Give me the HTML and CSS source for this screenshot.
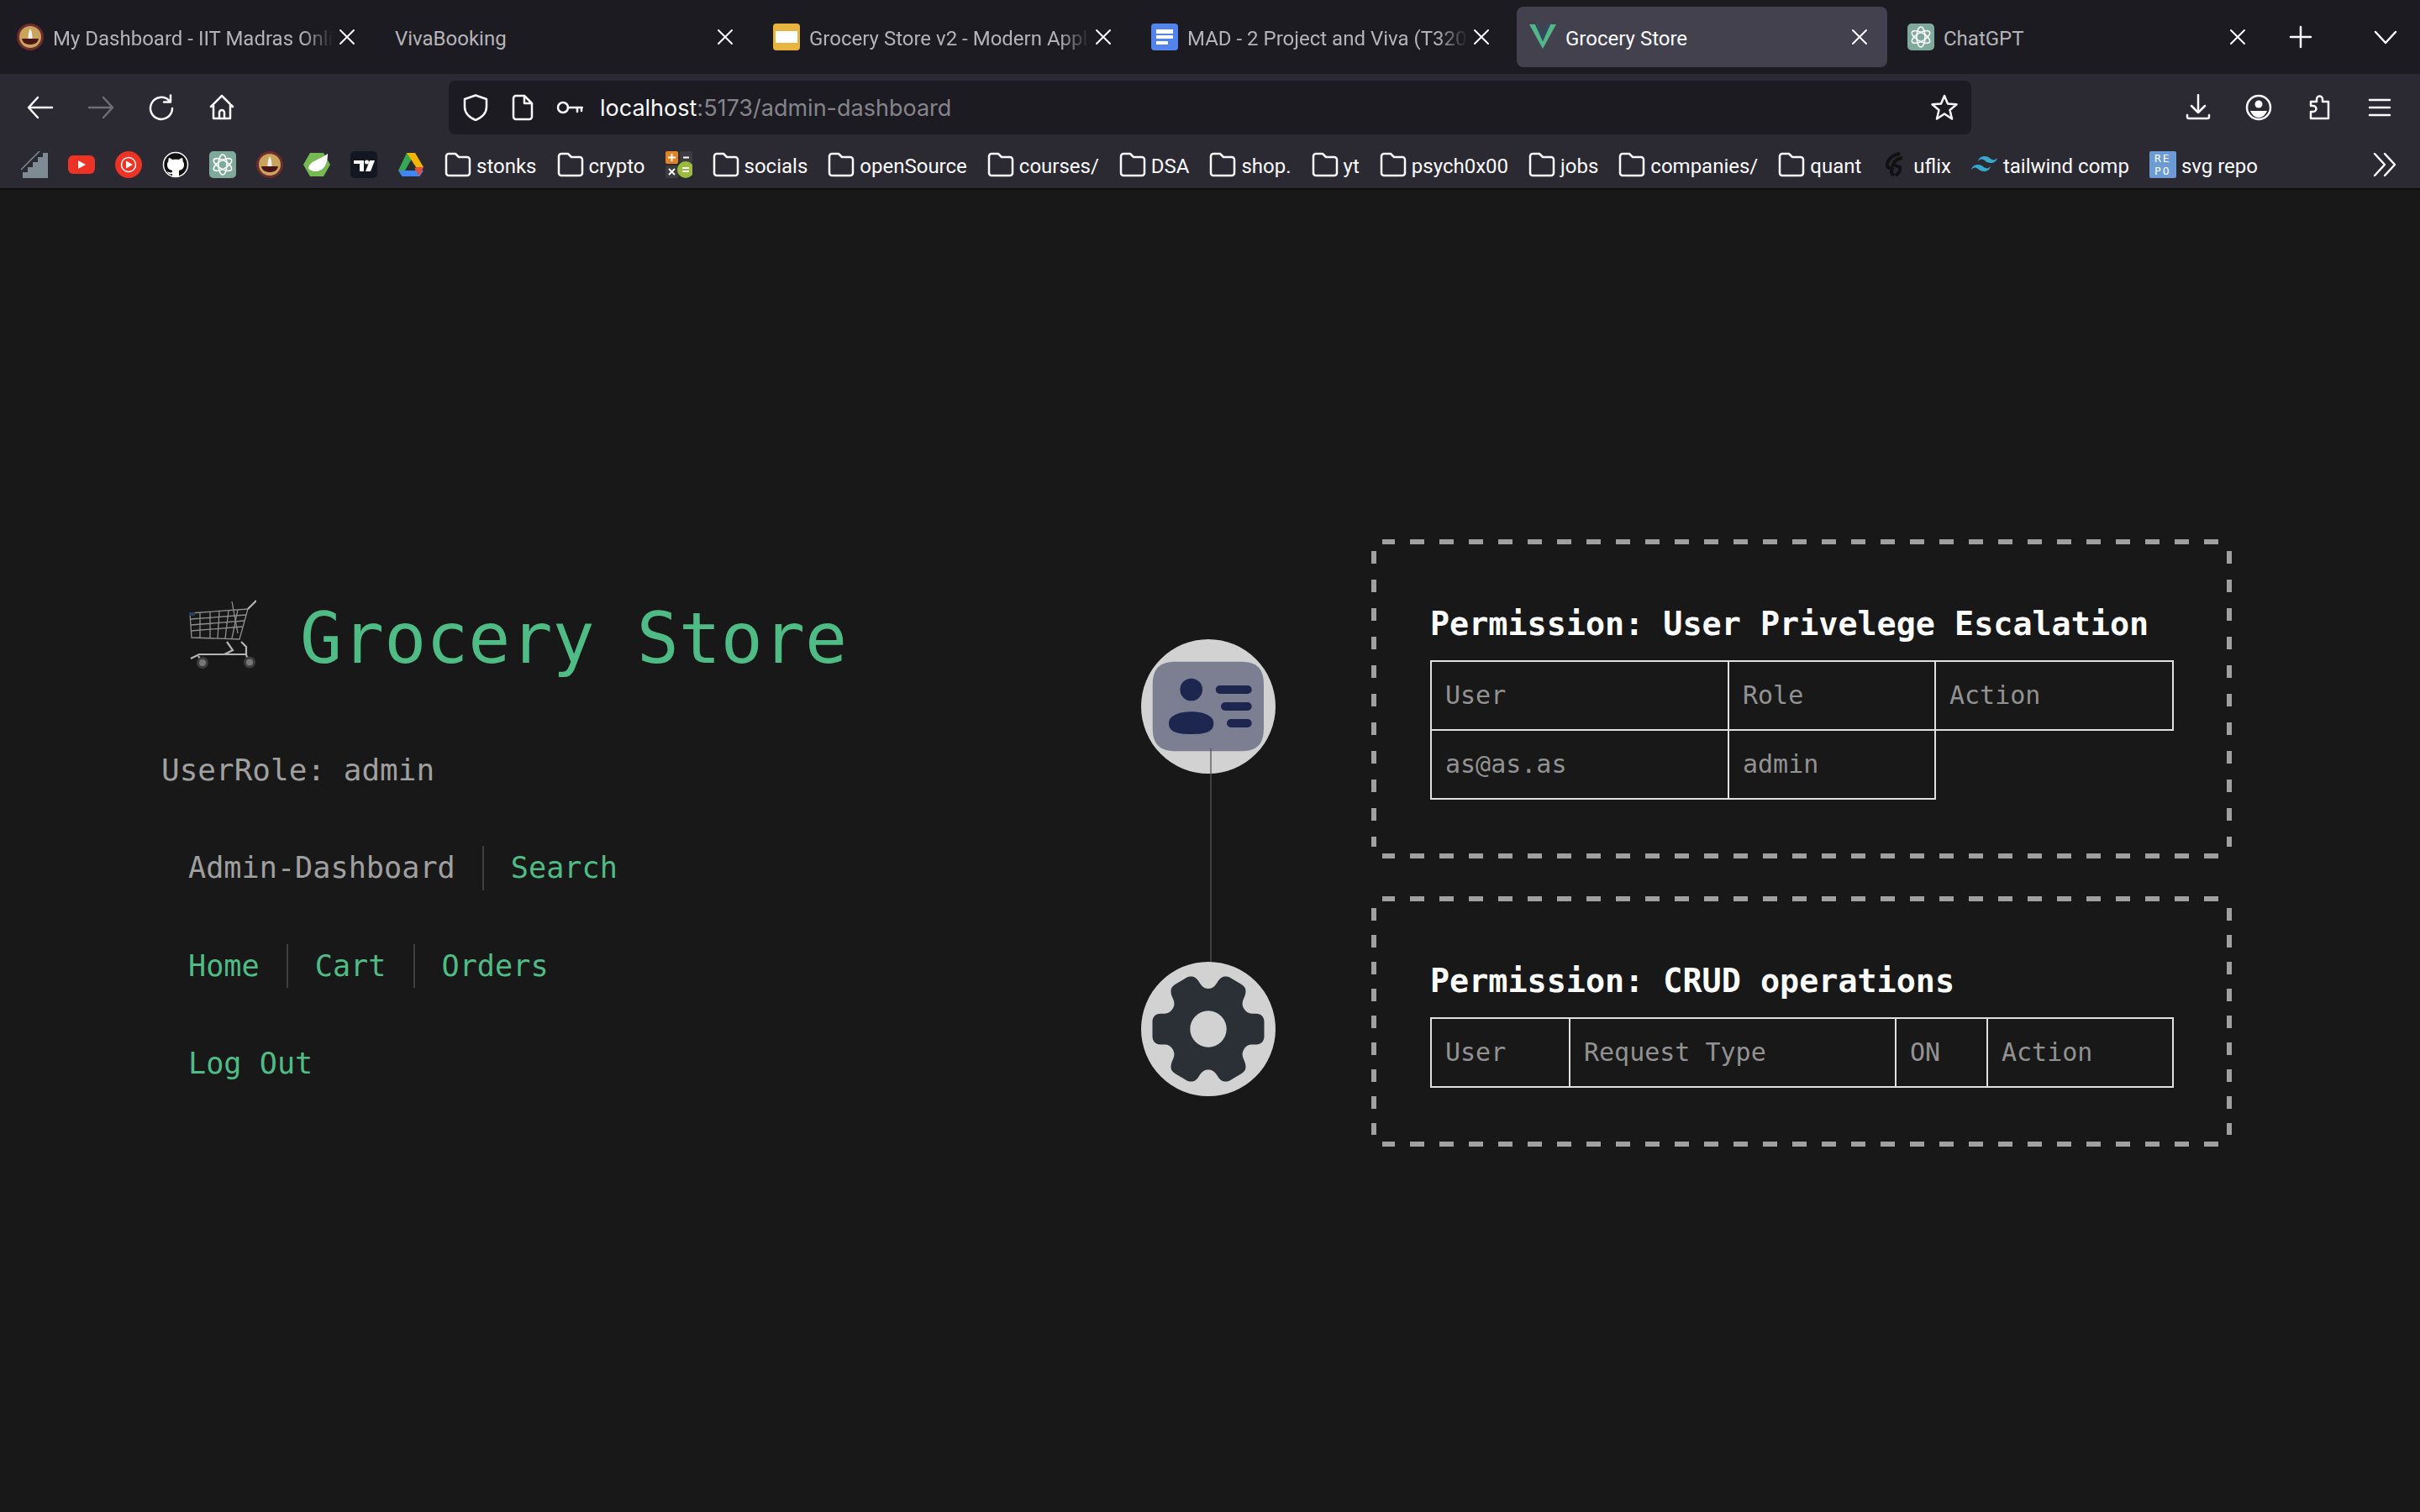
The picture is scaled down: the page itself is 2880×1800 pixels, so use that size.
FILE: index.html
```html
<!DOCTYPE html>
<html lang="en">
<head>
<meta charset="UTF-8">
<meta name="viewport" content="width=device-width, initial-scale=1.0">
<title>Grocery Store</title>
<link rel="stylesheet" href="styles.css">
</head>
<body>
<div class="tabbar">
  <div class="tab">
    <svg class="favicon" viewBox="0 0 32 32"><circle cx="16" cy="16" r="16" fill="#6e2a2c"/><circle cx="16" cy="16" r="13" fill="#c9a45c"/><path d="M6 18h20c-1 5-5 7-10 7s-9-2-10-7z" fill="#4a1512"/><path d="M16 6c2 3 2.500 7 2.500 12h-5c0-5 .5-9 2.500-12z" fill="#eee"/></svg>
    <span class="tab-title">My Dashboard - IIT Madras Onli</span>
    <span class="tab-close"><svg viewBox="0 0 32 32"><path d="M8 8l16 16M24 8L8 24"/></svg></span>
  </div>
  <div class="tab">
    <span class="tab-title">VivaBooking</span>
    <span class="tab-close"><svg viewBox="0 0 32 32"><path d="M8 8l16 16M24 8L8 24"/></svg></span>
  </div>
  <div class="tab">
    <svg class="favicon" viewBox="0 0 32 32"><rect x="0" width="32" height="32" rx="4" fill="#e8b33e"/><rect x="3" y="9" width="26" height="14" fill="#fff"/></svg>
    <span class="tab-title">Grocery Store v2 - Modern Appl</span>
    <span class="tab-close"><svg viewBox="0 0 32 32"><path d="M8 8l16 16M24 8L8 24"/></svg></span>
  </div>
  <div class="tab">
    <svg class="favicon" viewBox="0 0 32 32"><rect width="32" height="32" rx="4" fill="#5384ed"/><path d="M6 7h20v5H6zM6 14h20v4H6zM6 21h14v4H6z" fill="#fff"/></svg>
    <span class="tab-title">MAD - 2 Project and Viva (T320</span>
    <span class="tab-close"><svg viewBox="0 0 32 32"><path d="M8 8l16 16M24 8L8 24"/></svg></span>
  </div>
  <div class="tab tab-active">
    <svg class="favicon" viewBox="0 0 32 32"><path d="M0 1h7l9 20L25 1h7L16 30z" fill="#52b788"/><path d="M7 1h5l4 10 4-10h5l-9 20z" fill="#35495e"/></svg>
    <span class="tab-title">Grocery Store</span>
    <span class="tab-close"><svg viewBox="0 0 32 32"><path d="M8 8l16 16M24 8L8 24"/></svg></span>
  </div>
  <div class="tab">
    <svg class="favicon" viewBox="0 0 32 32"><rect width="32" height="32" rx="5" fill="#7ea99b"/><g class="knot"><ellipse cx="16" cy="16" rx="5" ry="12"/><ellipse cx="16" cy="16" rx="5" ry="12" transform="rotate(60 16 16)"/><ellipse cx="16" cy="16" rx="5" ry="12" transform="rotate(120 16 16)"/></g></svg>
    <span class="tab-title">ChatGPT</span>
    <span class="tab-close"><svg viewBox="0 0 32 32"><path d="M8 8l16 16M24 8L8 24"/></svg></span>
  </div>
  <span class="tabbar-btn"><svg class="ic" viewBox="0 0 32 32"><path d="M16 4v24M4 16h24"/></svg></span>
  <span class="tabbar-btn tabbar-list"><svg class="ic" viewBox="0 0 32 32"><path d="M4 10l12 13 12-13"/></svg></span>
</div>

<div class="toolbar">
  <span class="tool"><svg class="ic" viewBox="0 0 32 32"><path d="M30 16H2M13 4L2 16l11 12"/></svg></span>
  <span class="tool tool-off"><svg class="ic" viewBox="0 0 32 32"><path d="M2 16h28M19 4l11 12-11 12"/></svg></span>
  <span class="tool"><svg class="ic" viewBox="0 0 32 32"><path d="M25 7.500A13 13 0 1 0 29 17M27 1.500v8h-8"/></svg></span>
  <span class="tool"><svg class="ic" viewBox="0 0 32 32"><path d="M3 15L16 2l13 13M6 12v17h20V12M13 29v-7a3 3 0 0 1 6 0v7"/></svg></span>
  <div class="urlbar">
    <svg class="ic url-ic" viewBox="0 0 32 32"><path d="M16 1.500L29 6v9c0 8-6 13-13 16C9 28 3 23 3 15V6z"/></svg>
    <svg class="ic url-ic" viewBox="0 0 32 32"><path d="M5 5a3 3 0 0 1 3-3h10l9 9v16a3 3 0 0 1-3 3H8a3 3 0 0 1-3-3zM18 2v9h9"/></svg>
    <svg class="ic url-ic url-key" viewBox="0 0 32 32"><circle cx="8" cy="16" r="6"/><path d="M14 16h17M25 16v5M30 16v4"/></svg>
    <span class="url-text">localhost<span class="url-dim">:5173/admin-dashboard</span></span>
    <svg class="ic url-star" viewBox="0 0 32 32"><path d="M16 2l4 9.500 10.500.8-8 6.700 2.500 10.500L16 23.500 7 29.500l2.500-10.500-8-6.700L12 11.500z"/></svg>
  </div>
  <div class="tool-right">
    <span class="tool"><svg class="ic" viewBox="0 0 32 32"><path d="M16 1v21M8 14l8 8 8-8M3 25v2a2 2 0 0 0 2 2h22a2 2 0 0 0 2-2v-2"/></svg></span>
    <span class="tool"><svg class="ic" viewBox="0 0 32 32"><circle cx="16" cy="16" r="14"/><circle class="solid" cx="16" cy="12" r="4.500"/><path class="solid" d="M6 20h20c-2 5-6 8-10 8s-8-3-10-8z"/></svg></span>
    <span class="tool"><svg class="ic" viewBox="0 0 32 32"><path d="M6 9h7V6a3.500 3.500 0 0 1 7 0v3h7v20H6v-8h3a3.500 3.500 0 0 0 0-7H6z"/></svg></span>
    <span class="tool"><svg class="ic" viewBox="0 0 32 32"><path d="M4 7h24M4 16h24M4 25h24"/></svg></span>
  </div>
</div>

<div class="bookmarks">
  <svg class="bm-icon" viewBox="0 0 32 32"><path d="M32 2v30H2v-7h6v-6h6v-6h6V7h6V2z" fill="#7f8b94"/><path d="M0 22L22 0" stroke="#7f8b94" stroke-width="1.500"/></svg>
  <svg class="bm-icon" viewBox="0 0 32 32"><rect x="0" y="5" width="32" height="22" rx="6" fill="#ee3224"/><path d="M12 11l9 5-9 5z" fill="#fff"/></svg>
  <svg class="bm-icon" viewBox="0 0 32 32"><circle cx="16" cy="16" r="16" fill="#ee3224"/><circle cx="16" cy="16" r="8.500" fill="none" stroke="#fff" stroke-width="1.500"/><path d="M13 11.500l8 4.500-8 4.500z" fill="#fff"/></svg>
  <svg class="bm-icon" viewBox="0 0 32 32"><circle cx="16" cy="16" r="14.500" fill="#111" stroke="#fff" stroke-width="1.500"/><path d="M12 31v-4c-4 1-5-1-6-3 2 1 3 2 6 1v-2c-4-1-6-3-6-7 0-2 .5-3 1.500-4-.3-1 0-3 .5-4 1.500 0 3 1 4 2 2.500-.5 5.500-.5 8 0 1-1 2.500-2 4-2 .5 1 .8 3 .5 4 1 1 1.500 2 1.500 4 0 4-2 6-6 7v8z" fill="#fff"/></svg>
  <svg class="bm-icon" viewBox="0 0 32 32"><rect width="32" height="32" rx="5" fill="#7ea99b"/><g class="knot"><ellipse cx="16" cy="16" rx="5" ry="12"/><ellipse cx="16" cy="16" rx="5" ry="12" transform="rotate(60 16 16)"/><ellipse cx="16" cy="16" rx="5" ry="12" transform="rotate(120 16 16)"/></g></svg>
  <svg class="bm-icon" viewBox="0 0 32 32"><circle cx="16" cy="16" r="16" fill="#6e2a2c"/><circle cx="16" cy="16" r="13" fill="#c9a45c"/><path d="M6 18h20c-1 5-5 7-10 7s-9-2-10-7z" fill="#4a1512"/><path d="M16 6c2 3 2.500 7 2.500 12h-5c0-5 .5-9 2.500-12z" fill="#eee"/></svg>
  <svg class="bm-icon" viewBox="0 0 32 32"><path d="M8 2h16l8 14-8 14H8L0 16z" fill="#76b852"/><path d="M29 3c0 13-5 21-15 21-4 0-7-2-8-4 2-9 12-9 23-17z" fill="#fff"/></svg>
  <svg class="bm-icon" viewBox="0 0 32 32"><rect width="32" height="32" rx="5" fill="#131722"/><path d="M4 11h12v13h-5V15H4z" fill="#fff"/><circle cx="19.500" cy="13" r="2.500" fill="#fff"/><path d="M23 11h6l-5 13h-6z" fill="#fff"/></svg>
  <svg class="bm-icon" viewBox="0 0 32 32"><path d="M11 2h10L9 23H1z" fill="#34a853"/><path d="M21 2l10 17h-9L11 2z" fill="#f4b400"/><path d="M1 23l4.500 7h21l4.500-7z" fill="#4285f4"/><path d="M22 19h9l-4.500 11-6-9z" fill="#dd5044"/></svg>
  <div class="bm"><svg class="folder" viewBox="0 0 32 32"><path d="M2 6a3 3 0 0 1 3-3h8l4 4h10a3 3 0 0 1 3 3v16a3 3 0 0 1-3 3H5a3 3 0 0 1-3-3z"/></svg><span class="bm-label">stonks</span></div>
  <div class="bm"><svg class="folder" viewBox="0 0 32 32"><path d="M2 6a3 3 0 0 1 3-3h8l4 4h10a3 3 0 0 1 3 3v16a3 3 0 0 1-3 3H5a3 3 0 0 1-3-3z"/></svg><span class="bm-label">crypto</span></div>
  <svg class="bm-icon" viewBox="0 0 32 32"><rect x="0" y="0" width="15" height="15" rx="2" fill="#e0842a"/><rect x="17" y="0" width="15" height="15" rx="2" fill="#3c3c40"/><rect x="0" y="17" width="15" height="15" rx="2" fill="#3c3c40"/><circle cx="24" cy="22" r="10" fill="#9bbc3a"/><path d="M7.500 3v9M3 7.500h9M21 7.500h7M4 21l7 7M11 21l-7 7M20 20h8M20 24h8" stroke="#fff" stroke-width="1.800"/></svg>
  <div class="bm"><svg class="folder" viewBox="0 0 32 32"><path d="M2 6a3 3 0 0 1 3-3h8l4 4h10a3 3 0 0 1 3 3v16a3 3 0 0 1-3 3H5a3 3 0 0 1-3-3z"/></svg><span class="bm-label">socials</span></div>
  <div class="bm"><svg class="folder" viewBox="0 0 32 32"><path d="M2 6a3 3 0 0 1 3-3h8l4 4h10a3 3 0 0 1 3 3v16a3 3 0 0 1-3 3H5a3 3 0 0 1-3-3z"/></svg><span class="bm-label">openSource</span></div>
  <div class="bm"><svg class="folder" viewBox="0 0 32 32"><path d="M2 6a3 3 0 0 1 3-3h8l4 4h10a3 3 0 0 1 3 3v16a3 3 0 0 1-3 3H5a3 3 0 0 1-3-3z"/></svg><span class="bm-label">courses/</span></div>
  <div class="bm"><svg class="folder" viewBox="0 0 32 32"><path d="M2 6a3 3 0 0 1 3-3h8l4 4h10a3 3 0 0 1 3 3v16a3 3 0 0 1-3 3H5a3 3 0 0 1-3-3z"/></svg><span class="bm-label">DSA</span></div>
  <div class="bm"><svg class="folder" viewBox="0 0 32 32"><path d="M2 6a3 3 0 0 1 3-3h8l4 4h10a3 3 0 0 1 3 3v16a3 3 0 0 1-3 3H5a3 3 0 0 1-3-3z"/></svg><span class="bm-label">shop.</span></div>
  <div class="bm"><svg class="folder" viewBox="0 0 32 32"><path d="M2 6a3 3 0 0 1 3-3h8l4 4h10a3 3 0 0 1 3 3v16a3 3 0 0 1-3 3H5a3 3 0 0 1-3-3z"/></svg><span class="bm-label">yt</span></div>
  <div class="bm"><svg class="folder" viewBox="0 0 32 32"><path d="M2 6a3 3 0 0 1 3-3h8l4 4h10a3 3 0 0 1 3 3v16a3 3 0 0 1-3 3H5a3 3 0 0 1-3-3z"/></svg><span class="bm-label">psych0x00</span></div>
  <div class="bm"><svg class="folder" viewBox="0 0 32 32"><path d="M2 6a3 3 0 0 1 3-3h8l4 4h10a3 3 0 0 1 3 3v16a3 3 0 0 1-3 3H5a3 3 0 0 1-3-3z"/></svg><span class="bm-label">jobs</span></div>
  <div class="bm"><svg class="folder" viewBox="0 0 32 32"><path d="M2 6a3 3 0 0 1 3-3h8l4 4h10a3 3 0 0 1 3 3v16a3 3 0 0 1-3 3H5a3 3 0 0 1-3-3z"/></svg><span class="bm-label">companies/</span></div>
  <div class="bm"><svg class="folder" viewBox="0 0 32 32"><path d="M2 6a3 3 0 0 1 3-3h8l4 4h10a3 3 0 0 1 3 3v16a3 3 0 0 1-3 3H5a3 3 0 0 1-3-3z"/></svg><span class="bm-label">quant</span></div>
  <div class="bm"><svg class="bm-small" viewBox="0 0 32 32"><path d="M22 3C14 4 8 9 7 15c-1 5 3 6 7 4M14 19c-3 3-3 7 1 10M25 8c-6 1-10 4-11 8l8 3c1 4-1 7-5 10" fill="none" stroke="#111" stroke-width="4"/></svg><span class="bm-label">uflix</span></div>
  <div class="bm"><svg class="bm-small" viewBox="0 0 32 32"><path d="M16 6c-4 0-7 2-8 6 2-2 4-3 6-2 3 1 4 4 9 4 4 0 7-2 8-6-2 2-4 3-6 2-3-1-4-4-9-4zM8 16c-4 0-7 2-8 6 2-2 4-3 6-2 3 1 4 4 9 4 4 0 7-2 8-6-2 2-4 3-6 2-3-1-4-4-9-4z" fill="#38a9c9"/></svg><span class="bm-label">tailwind comp</span></div>
  <div class="bm"><span class="repo-icon">RE PO</span><span class="bm-label">svg repo</span></div>
  <span class="bm-more"><svg class="ic" viewBox="0 0 32 32"><path d="M4 3l12 13L4 29M16 3l12 13-12 13"/></svg></span>
</div>

<div class="app">
  <div class="sidebar">
    <div class="brand">
      <svg class="cart" viewBox="0 0 80 82">
        <g class="cart-lines">
          <path d="M1 16L70 11 60 47 3 45z"/>
          <path d="M1.500 23L68 18M2 30L66 25M2.500 37L63.500 32M13 15v31M25 14.500v31M36 14l-2 32M47 13l-4 33M58 12l-7 34"/>
          <path d="M51 2l7 38"/>
        </g>
        <g class="cart-frame">
          <path d="M70 11l3-3 7-7"/>
          <path d="M45 50l7 10-10 5M62 50l6 6v9"/>
          <path d="M2 70l10-5h57"/>
          <path d="M11 67l5 8M68 66l4 8"/>
        </g>
        <rect x="0" y="15" width="7" height="4" fill="#25415f"/>
        <circle class="cart-wheel" cx="16" cy="75" r="5.500"/>
        <circle class="cart-wheel" cx="72" cy="74.500" r="5.500"/>
      </svg>
      <h1 class="store-name">Grocery Store</h1>
    </div>
    <p class="user-role">UserRole: admin</p>
    <nav class="nav-row">
      <a class="nav-link nav-current">Admin-Dashboard</a>
      <a class="nav-link">Search</a>
    </nav>
    <nav class="nav-row">
      <a class="nav-link">Home</a>
      <a class="nav-link">Cart</a>
      <a class="nav-link">Orders</a>
    </nav>
    <nav class="nav-row">
      <a class="nav-link">Log Out</a>
    </nav>
  </div>

  <div class="perm-list">
    <div class="perm-item">
      <div class="perm-icon perm-icon-line">
        <svg viewBox="0 0 160 160">
          <circle cx="80" cy="80" r="80" fill="#d2d2d2"/>
          <path d="M42 26.700h76c20 0 28 8 28 28v50.600c0 20-8 28-28 28H42c-20 0-28.300-8-28.300-28V54.700c0-20 8.300-28 28.300-28z" fill="#7b7f91"/>
          <circle cx="59.700" cy="60" r="13.300" fill="#1d264e"/>
          <path d="M33 100c0-9 12-13.700 26.700-13.700S86.300 91 86.300 100c0 10-9 13-26.600 13S33 110 33 100z" fill="#1d264e"/>
          <rect x="88.700" y="55" width="43" height="10" rx="5" fill="#1d264e"/>
          <rect x="95" y="75" width="36.700" height="10" rx="5" fill="#1d264e"/>
          <rect x="102" y="95" width="29.700" height="10" rx="5" fill="#1d264e"/>
        </svg>
      </div>
      <section class="perm-card perm-card-tall">
        <h3 class="perm-title">Permission: User Privelege Escalation</h3>
        <table class="perm-table">
          <colgroup><col class="col-a1"><col class="col-a2"><col class="col-a3"></colgroup>
          <tr><td>User</td><td>Role</td><td>Action</td></tr>
          <tr><td>as@as.as</td><td>admin</td></tr>
        </table>
      </section>
    </div>
    <div class="perm-item">
      <div class="perm-icon">
        <svg viewBox="0 0 160 160">
          <circle cx="80" cy="80" r="80" fill="#d2d2d2"/>
          <path d="M80 32c5 0 8-3 11-8s6-6.500 9.500-6.500c2.500 0 4.500.5 6.500 2l11 6.500c4.500 2.500 6.500 5 6.500 9 0 3-1 6-2.500 9-2 4-2 8 .5 12s5.500 5.700 9.500 5.700h5c6 0 9.500 4.300 9.500 9.300v18c0 5-3.500 9.500-9.500 9.500h-5c-4 0-7 1.500-9.500 5.500s-2.500 8-.5 12c1.500 3 2.500 6 2.500 9 0 4-2 6.500-6.500 9l-11 6.500c-2 1.500-4 2-6.500 2-3.500 0-6.500-1.500-9.500-6.500s-6-7.500-11-7.500-8 2.500-11 7.500-6 6.500-9.500 6.500c-2.500 0-4.500-.5-6.500-2l-11-6.500c-4.500-2.500-6.500-5-6.500-9 0-3 1-6 2.500-9 2-4 2-8-.5-12s-5.500-5.500-9.500-5.500h-5c-6 0-9.500-4.500-9.500-9.500v-18c0-5 3.500-9.300 9.500-9.300h5c4 0 7-1.700 9.500-5.700s2.500-8 .5-12c-1.500-3-2.500-6-2.500-9 0-4 2-6.500 6.500-9l11-6.500c2-1.500 4-2 6.500-2 3.500 0 6.500 1.500 9.500 6.500s6 8 11 8z" fill="#2b2f36"/>
          <circle cx="80" cy="80" r="21.700" fill="#d2d2d2"/>
        </svg>
      </div>
      <section class="perm-card perm-card-short">
        <h3 class="perm-title">Permission: CRUD operations</h3>
        <table class="perm-table">
          <colgroup><col class="col-b1"><col class="col-b2"><col class="col-b3"><col class="col-b4"></colgroup>
          <tr><td>User</td><td>Request Type</td><td>ON</td><td>Action</td></tr>
        </table>
      </section>
    </div>
  </div>
</div>
</body>
</html>
```

FILE: styles.css
```css
* {
  box-sizing: border-box;
}
html, body {
  margin: 0;
  height: 100%;
}
body {
  display: flex;
  flex-direction: column;
  overflow: hidden;
  background-color: #181818;
  font-family: "DejaVu Sans Mono", monospace;
  color: #a0a0a0;
}

/* browser chrome */
.tabbar {
  display: flex;
  align-items: center;
  flex: none;
  height: 88px;
  gap: 9px;
  padding-left: 5px;
  background-color: #1c1b22;
  font-family: Roboto, sans-serif;
  font-size: 24px;
}
.tab {
  display: flex;
  align-items: center;
  flex: none;
  width: 441px;
  height: 72px;
  padding: 0 17px 0 15px;
  border-radius: 8px;
  color: #b4b4b8;
}
.tab-active {
  background-color: #42414d;
  color: #fbfbfe;
}
.favicon {
  flex: none;
  width: 32px;
  height: 32px;
  margin-right: 11px;
}
.knot ellipse {
  fill: none;
  stroke: #fff;
  stroke-width: 1.600;
}
.tab-title {
  flex: 1;
  min-width: 0;
  padding-top: 3px;
  overflow: hidden;
  white-space: nowrap;
}
.tab:nth-child(1) .tab-title, .tab:nth-child(3) .tab-title, .tab:nth-child(4) .tab-title {
  -webkit-mask-image: linear-gradient(90deg, #000 calc(100% - 36px), transparent);
  mask-image: linear-gradient(90deg, #000 calc(100% - 36px), transparent);
}
.tab-close {
  flex: none;
  display: flex;
  width: 32px;
  height: 32px;
}
.tab-close path {
  fill: none;
  stroke: #fbfbfe;
  stroke-width: 2;
  stroke-linecap: round;
}
.ic, .folder {
  fill: none;
  stroke: #fbfbfe;
  stroke-width: 2.500;
  stroke-linecap: round;
  stroke-linejoin: round;
}
.ic .solid {
  fill: #fbfbfe;
  stroke: none;
}
.tabbar-btn {
  display: flex;
  width: 32px;
  height: 32px;
  margin-left: 17px;
}
.tabbar-list {
  margin-left: 60px;
}
.toolbar {
  display: flex;
  align-items: center;
  flex: none;
  height: 72px;
  padding: 8px 12px 0;
  background-color: #2b2a33;
}
.tool {
  display: flex;
  align-items: center;
  justify-content: center;
  width: 72px;
  height: 64px;
}
.tool .ic {
  width: 32px;
  height: 32px;
}
.tool-off .ic {
  stroke: #6f6e75;
}
.urlbar {
  display: flex;
  align-items: center;
  width: 1812px;
  height: 64px;
  margin-left: 234px;
  padding: 0 16px;
  border-radius: 8px;
  background-color: #1c1b22;
}
.url-ic {
  flex: none;
  width: 32px;
  height: 32px;
  margin-right: 24px;
}
.url-key {
  margin-right: 20px;
}
.url-text {
  flex: 1;
  font-family: Inter, sans-serif;
  font-size: 27px;
  color: #fbfbfe;
}
.url-dim {
  color: #85848b;
}
.url-star {
  flex: none;
  width: 32px;
  height: 32px;
}
.tool-right {
  display: flex;
  margin-left: auto;
}
.bookmarks {
  display: flex;
  align-items: center;
  flex: none;
  height: 66px;
  gap: 24px;
  padding: 8px 0 0 25px;
  border-bottom: 2px solid #0e0e10;
  background-color: #2b2a33;
  font-family: Roboto, sans-serif;
  font-size: 24px;
  color: #fbfbfe;
}
.bm-icon {
  flex: none;
  width: 32px;
  height: 32px;
}
.bm {
  display: flex;
  align-items: center;
  flex: none;
  gap: 6px;
  white-space: nowrap;
}
.bm-label {
  padding-top: 3px;
}
.folder, .bm-small {
  flex: none;
  width: 32px;
  height: 32px;
}
.repo-icon {
  flex: none;
  width: 32px;
  height: 32px;
  padding-top: 1px;
  background-color: #6c9bd6;
  border-radius: 2px;
  font-size: 13px;
  line-height: 15px;
  letter-spacing: 2px;
  text-align: center;
  white-space: normal;
  color: #fff;
  font-family: "DejaVu Sans Mono", monospace;
}
.bm-more {
  display: flex;
  width: 32px;
  height: 32px;
  margin-left: auto;
  margin-right: 26px;
}

/* page */
.app {
  flex: 1;
  display: flex;
  align-items: center;
  justify-content: space-between;
  padding: 0 224px 19px 192px;
}
.brand {
  display: flex;
  align-items: flex-start;
  height: 83px;
  padding-left: 33px;
}
.cart {
  flex: none;
  width: 80px;
  height: 82px;
}
.cart-lines {
  fill: none;
  stroke: #8f8f8f;
  stroke-width: 1.300;
}
.cart-frame {
  fill: none;
  stroke: #b5b5b5;
  stroke-width: 2.200;
}
.cart-wheel {
  fill: #777;
  stroke: #3c3c3c;
  stroke-width: 3;
}
.store-name {
  margin: 5px 0 0 52px;
  font-size: 83.2px;
  font-weight: 400;
  line-height: 83px;
  color: #4fbc85;
}
.user-role {
  margin: 91px 0 0;
  font-size: 36px;
  line-height: 58px;
}
.nav-row {
  display: flex;
  height: 52.8px;
  margin-top: 64px;
  font-size: 35.2px;
  line-height: 52.8px;
}
.user-role + .nav-row {
  margin-top: 61px;
}
.nav-link {
  padding: 0 32px;
  border-left: 2px solid #3f3f3f;
  color: #4fbc85;
  white-space: nowrap;
}
.nav-link:first-child {
  border-left: 0;
}
.nav-current {
  color: #a0a0a0;
}
.perm-list {
  display: flex;
  flex-direction: column;
  gap: 45px;
}
.perm-item {
  display: flex;
  align-items: center;
  gap: 114px;
}
.perm-icon {
  position: relative;
  flex: none;
  width: 160px;
  height: 160px;
  margin-top: 18px;
}
.perm-icon svg {
  display: block;
}
.perm-icon-line::after {
  content: "";
  position: absolute;
  left: 82px;
  top: 130px;
  width: 2px;
  height: 255px;
  background-color: rgba(84, 84, 84, 0.65);
}
.perm-card {
  width: 1024px;
  padding: 70px 70px 70px;
  --dash: #a0a0a0;
  background:
    repeating-linear-gradient(90deg, var(--dash) -2.4px 15px, transparent 15px 32.6px) center top / 998px 6px no-repeat,
    repeating-linear-gradient(90deg, var(--dash) -2.4px 15px, transparent 15px 32.6px) center bottom / 998px 6px no-repeat,
    repeating-linear-gradient(180deg, var(--dash) 0 var(--vd), transparent var(--vd) var(--vp)) left center / 6px calc(100% - 28px) no-repeat,
    repeating-linear-gradient(180deg, var(--dash) 0 var(--vd), transparent var(--vd) var(--vp)) right center / 6px calc(100% - 28px) no-repeat;
}
.perm-card-tall {
  --vd: 15px;
  --vp: 34px;
}
.perm-card-short {
  --vd: 15px;
  --vp: 32px;
}
.perm-title {
  margin: 0 0 13px;
  font-size: 38.4px;
  font-weight: 700;
  line-height: 61px;
  color: #fff;
}
.perm-table {
  width: 883px;
  table-layout: fixed;
  border-collapse: collapse;
  font-size: 30px;
  line-height: 48px;
}
.perm-table td {
  height: 82px;
  padding: 16px;
  border: 2px solid #e0e0e0;
  color: #929292;
}
.col-a1 { width: 354px; }
.col-a2 { width: 246px; }
.col-a3 { width: 283px; }
.col-b1 { width: 165px; }
.col-b2 { width: 388px; }
.col-b3 { width: 109px; }
.col-b4 { width: 221px; }
```
